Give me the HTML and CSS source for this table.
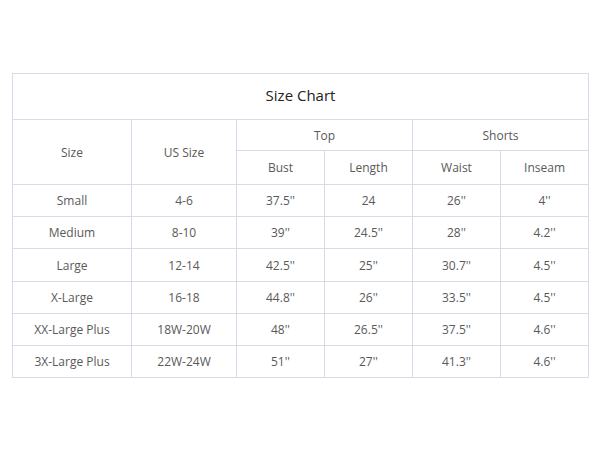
FILE: index.html
```html
<!DOCTYPE html>
<html>
<head>
<meta charset="utf-8">
<link rel="stylesheet" href="styles.css">
</head>
<body>
<div class="page">
<table class="chart">
  <colgroup>
    <col class="c-size"><col class="c-us"><col class="c-m"><col class="c-m"><col class="c-m"><col class="c-m">
  </colgroup>
  <thead>
    <tr class="title-row"><th colspan="6" class="title">Size Chart</th></tr>
    <tr class="h1"><th rowspan="2">Size</th><th rowspan="2">US Size</th><th colspan="2">Top</th><th colspan="2">Shorts</th></tr>
    <tr class="h2"><th>Bust</th><th>Length</th><th>Waist</th><th>Inseam</th></tr>
  </thead>
  <tbody>
    <tr><td>Small</td><td>4-6</td><td>37.5''</td><td>24</td><td>26''</td><td>4''</td></tr>
    <tr><td>Medium</td><td>8-10</td><td>39''</td><td>24.5''</td><td>28''</td><td>4.2''</td></tr>
    <tr class="tall"><td>Large</td><td>12-14</td><td>42.5''</td><td>25''</td><td>30.7''</td><td>4.5''</td></tr>
    <tr><td>X-Large</td><td>16-18</td><td>44.8''</td><td>26''</td><td>33.5''</td><td>4.5''</td></tr>
    <tr><td>XX-Large Plus</td><td>18W-20W</td><td>48''</td><td>26.5''</td><td>37.5''</td><td>4.6''</td></tr>
    <tr><td>3X-Large Plus</td><td>22W-24W</td><td>51''</td><td>27''</td><td>41.3''</td><td>4.6''</td></tr>
  </tbody>
</table>
</div>
</body>
</html>
```
FILE: styles.css
```css
html, body {
  margin: 0;
  padding: 0;
  background: #ffffff;
}
.page {
  padding: 73px 0 0 12px;
}
.chart {
  border-collapse: collapse;
  table-layout: fixed;
  width: 576px;
  font-family: "Open Sans", "Noto Sans", sans-serif;
  font-size: 12px;
  color: #595959;
}
.c-size { width: 119px; }
.c-us { width: 105px; }
.c-m { width: 88px; }
.chart th, .chart td {
  border: 1px solid #d6dae9;
  text-align: center;
  vertical-align: middle;
  font-weight: normal;
  padding: 0;
}
.title-row { height: 46px; }
.chart th.title {
  font-size: 15px;
  color: #222222;
  padding-bottom: 4px;
}
.h1 { height: 31px; }
.h2 { height: 34px; }
.chart tbody tr { height: 32px; }
.chart tbody tr.tall { height: 33px; }
```
